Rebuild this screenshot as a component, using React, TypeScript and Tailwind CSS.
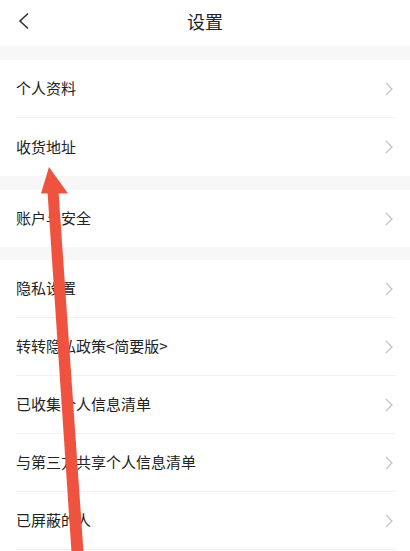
import type { ReactNode } from "react";

const groups: string[][] = [
  ["个人资料", "收货地址"],
  ["账户与安全"],
  [
    "隐私设置",
    "转转隐私政策<简要版>",
    "已收集个人信息清单",
    "与第三方共享个人信息清单",
    "已屏蔽的人",
  ],
];

function Chevron({ dir }: { dir: "left" | "right" }) {
  if (dir === "left") {
    return (
      <svg width="12" height="18" viewBox="0 0 12 18" fill="none">
        <path d="M10 1.5 L2 9 L10 16.5" stroke="#333" strokeWidth="1.6" strokeLinejoin="miter" />
      </svg>
    );
  }
  return (
    <svg width="8" height="14" viewBox="0 0 8 14" fill="none">
      <path d="M1 1 L7 7 L1 13" stroke="#c2c2c2" strokeWidth="1.2" />
    </svg>
  );
}

function Row({ label, last, h }: { label: ReactNode; last: boolean; h: string }) {
  return (
    <div className={`ml-4 mr-[14px] flex items-center justify-between ${h} ${last ? "" : "border-b border-[#f1f1f1]"}`}>
      <span className="text-[15px] text-[#222]">{label}</span>
      <span className="mr-[3px] flex items-center">
        <Chevron dir="right" />
      </span>
    </div>
  );
}

function Band({ h }: { h: string }) {
  return <div className={`${h} bg-[#f7f7f7]`} />;
}

export default function App() {
  return (
    <div
      className="relative h-[551px] w-[410px] overflow-hidden bg-white"
      style={{ fontFamily: '"Noto Sans CJK SC", "Noto Sans", sans-serif' }}
    >
      <header className="relative flex h-[46px] items-center justify-center pb-[4px]">
        <span className="absolute left-[18px] top-[12px]">
          <Chevron dir="left" />
        </span>
        <h1 className="text-[18px] text-[#222]">设置</h1>
      </header>

      <Band h="h-[14px]" />
      <div>
        {groups[0].map((t, i) => (
          <Row key={t} label={t} last={i === groups[0].length - 1} h="h-[58px]" />
        ))}
      </div>
      <Band h="h-[14px]" />
      <div>
        {groups[1].map((t) => (
          <Row key={t} label={t} last h="h-[57px]" />
        ))}
      </div>
      <Band h="h-[13px]" />
      <div>
        {groups[2].map((t) => (
          <Row key={t} label={t} last={false} h="h-[58px]" />
        ))}
      </div>

      {/* annotation arrow drawn over the list */}
      <svg
        className="pointer-events-none absolute left-0 top-0"
        width="410"
        height="551"
        viewBox="0 0 410 551"
      >
        <polygon points="49,167 41,193.5 68,193.5" fill="#ef5340" />
        <polygon points="47.5,192 58.5,192 83.5,552 71.5,552" fill="#ef5340" />
      </svg>
    </div>
  );
}
